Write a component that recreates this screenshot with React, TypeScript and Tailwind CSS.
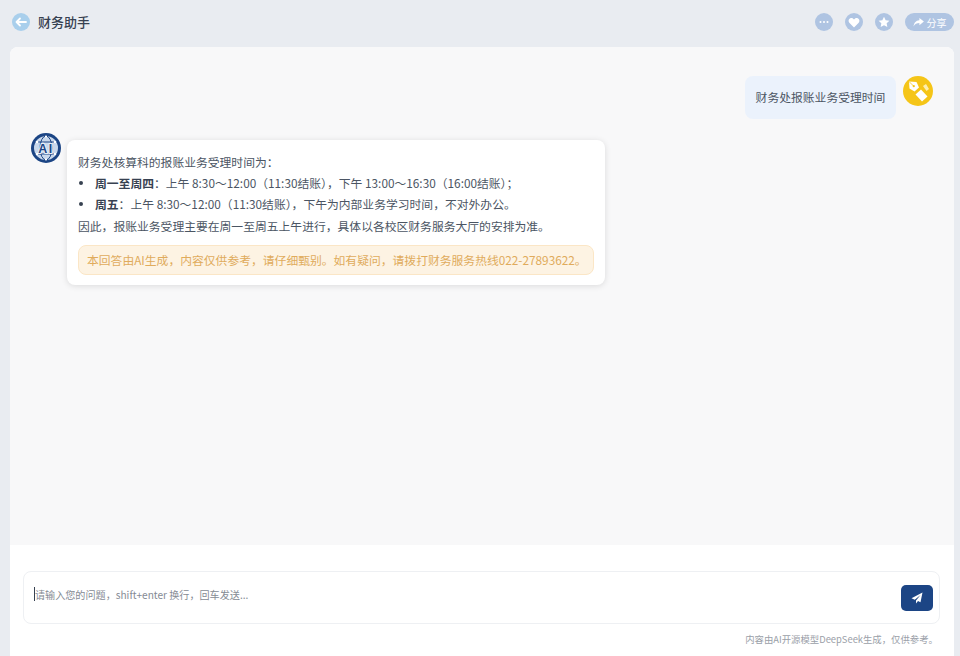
const font = { fontFamily: '"Noto Sans CJK SC", "Noto Sans", sans-serif' };

function CircleBtn({ children }: { children: React.ReactNode }) {
  return <div className="w-[18px] h-[18px] rounded-full bg-[#afc4e2] flex items-center justify-center">{children}</div>;
}

function AiAvatar() {
  return (
    <svg width="30" height="30" viewBox="0 0 30 30" className="shrink-0">
      <circle cx="15" cy="15" r="15" fill="#1c4585" />
      <circle cx="15" cy="15" r="12" fill="#c9d8ec" />
      <ellipse cx="15" cy="15" rx="6" ry="12" fill="none" stroke="#1c4585" strokeWidth="1" />
      <path d="M4 9h22M4 21h22" stroke="#1c4585" strokeWidth="1" />
      <text x="15" y="19.500" textAnchor="middle" fontSize="12.500" fontWeight="700" fill="#1c4585" stroke="#e8eff8" strokeWidth="2" paintOrder="stroke" letterSpacing="1.500" fontFamily="Liberation Sans, sans-serif">AI</text>
      <circle cx="6" cy="9" r="1.300" fill="#fff" />
      <circle cx="24" cy="9" r="1.300" fill="#fff" />
      <circle cx="6" cy="21" r="1.300" fill="#fff" />
      <circle cx="24" cy="21" r="1.300" fill="#fff" />
      <circle cx="15" cy="3.500" r="1.100" fill="#fff" />
      <circle cx="15" cy="26.500" r="1.100" fill="#fff" />
    </svg>
  );
}

function UserAvatar() {
  return (
    <svg width="30" height="30" viewBox="0 0 30 30" className="shrink-0">
      <circle cx="15" cy="15" r="15" fill="#f5c518" />
      <path d="M6 5.500 L13.500 6 L16 11.500 L11.500 15.500 L6.500 12.500 Z" fill="#fff" />
      <path d="M6 5.500 L10.500 10" stroke="#f5c518" strokeWidth="0.8" />
      <circle cx="10.800" cy="10.200" r="1.100" fill="#f5c518" />
      <path d="M12.500 18.500 L18 13.500 L24.500 20.500 L19 25.500 Z" fill="#fff" />
      <path d="M20 10 L23 8 L26 13 L23.500 15 Z" fill="#fdeeb0" />
    </svg>
  );
}

export default function App() {
  return (
    <div className="w-[960px] h-[656px] overflow-hidden bg-[#e9ecf1] flex flex-col text-[#4b5563]" style={font}>
      <header className="h-[47px] shrink-0 flex items-center justify-between pl-[12px] pr-[6px] pb-[3px]">
        <div className="flex items-center gap-[8px]">
          <div className="w-[18px] h-[18px] rounded-full bg-[#a9cfec] flex items-center justify-center">
            <svg width="12" height="10" viewBox="0 0 12 10" fill="none" stroke="#fff" strokeWidth="1.8" strokeLinecap="round" strokeLinejoin="round"><path d="M11 5H2M5 1.500 1.500 5 5 8.500" /></svg>
          </div>
          <span className="text-[13px] leading-[18px] font-medium text-[#374151] mb-[1px]">财务助手</span>
        </div>
        <div className="flex items-center gap-[12px]">
          <CircleBtn>
            <svg width="10" height="4" viewBox="0 0 10 4" fill="#fff"><circle cx="1.500" cy="2" r="1" /><circle cx="5" cy="2" r="1" /><circle cx="8.500" cy="2" r="1" /></svg>
          </CircleBtn>
          <CircleBtn>
            <svg width="12" height="11" viewBox="0 0 24 22" fill="#fff"><path d="M12 21 2.600 11.400C-.4 8.200 1.600 2 6.600 2c2.400 0 4.200 1.200 5.400 3 1.200-1.800 3-3 5.400-3 5 0 7 6.200 4 9.400Z" /></svg>
          </CircleBtn>
          <CircleBtn>
            <svg width="12" height="12" viewBox="0 0 24 24" fill="#fff"><path d="m12 1.500 3.300 6.900 7.500 1-5.500 5.200 1.400 7.500L12 18.500l-6.700 3.600 1.400-7.500L1.200 9.400l7.500-1Z" /></svg>
          </CircleBtn>
          <div className="w-[49px] h-[18px] rounded-full bg-[#afc4e2] flex items-center justify-center gap-[3px] text-white text-[10px]">
            <svg width="11" height="9" viewBox="0 0 12 10" fill="#fff"><path d="M7 0l5 4-5 4V5.600C4 5.600 2 6.500.5 9.500.8 5.500 3 2.700 7 2.400Z" /></svg>
            <span>分享</span>
          </div>
        </div>
      </header>

      <main className="flex-1 min-h-0 ml-[10px] mr-[6px] rounded-t-[8px] bg-white flex flex-col overflow-hidden">
        <section className="h-[498px] shrink-0 bg-[#f8f8f9] pt-[29px] pl-[21px] pr-[21px]">
          <div className="flex justify-end items-start gap-[7px]">
            <div className="w-[151px] h-[43px] rounded-[8px] bg-[#ebf2fc] flex items-center justify-center text-[11.8px] pb-[2px] text-[#4b5563]">财务处报账业务受理时间</div>
            <UserAvatar />
          </div>
          <div className="flex items-start gap-[6px] mt-[14px]">
            <AiAvatar />
            <div className="mt-[7px] w-[538px] h-[145px] rounded-[8px] bg-white shadow-[0_1px_6px_rgba(0,0,0,0.12)] px-[11px] pt-[11px] text-[11.8px] leading-[21.2px] text-[#4b5563]">
              <p>财务处核算科的报账业务受理时间为：</p>
              <ul>
                <li className="flex items-center">
                  <span className="w-[4px] h-[4px] rounded-full bg-[#374151] ml-[1px] mr-[12px]" />
                  <span><b className="font-bold text-[#374151]">周一至周四</b>：上午 8:30～12:00（11:30结账），下午 13:00～16:30（16:00结账）；</span>
                </li>
                <li className="flex items-center">
                  <span className="w-[4px] h-[4px] rounded-full bg-[#374151] ml-[1px] mr-[12px]" />
                  <span><b className="font-bold text-[#374151]">周五</b>：上午 8:30～12:00（11:30结账），下午为内部业务学习时间，不对外办公。</span>
                </li>
              </ul>
              <p>因此，报账业务受理主要在周一至周五上午进行，具体以各校区财务服务大厅的安排为准。</p>
              <div className="mt-[9px] h-[30px] rounded-[8px] bg-[#fdf3e3] border border-[#fbe6c6] px-[8px] flex items-center whitespace-nowrap text-[#e0ab5c] text-[11.8px]">
                本回答由AI生成，内容仅供参考，请仔细甄别。如有疑问，请拨打财务服务热线022-27893622。
              </div>
            </div>
          </div>
        </section>
        <section className="flex-1 bg-white px-[13px] pt-[26px]">
          <div className="h-[53px] w-[917px] rounded-[8px] border border-[#eef0f3] flex items-center justify-between pl-[10px] pr-[6px]">
            <div className="flex items-center text-[10.1px] text-[#858b94] mb-[6px]">
              <span className="w-[1px] h-[14px] bg-[#374151]" />
              <span>请输入您的问题，shift+enter 换行，回车发送...</span>
            </div>
            <div className="w-[32px] h-[26px] rounded-[5px] bg-[#1c4585] flex items-center justify-center">
              <svg width="12" height="12" viewBox="0 0 24 24" fill="#fff"><path d="M23 1 1 12.500l6.500 3L19 6 10 17v6l4-5 5 2.500Z" /></svg>
            </div>
          </div>
          <div className="mt-[8px] w-[917px] text-right text-[9.4px] text-[#9aa0a8] pr-[2px]">内容由AI开源模型DeepSeek生成，仅供参考。</div>
        </section>
      </main>
    </div>
  );
}
